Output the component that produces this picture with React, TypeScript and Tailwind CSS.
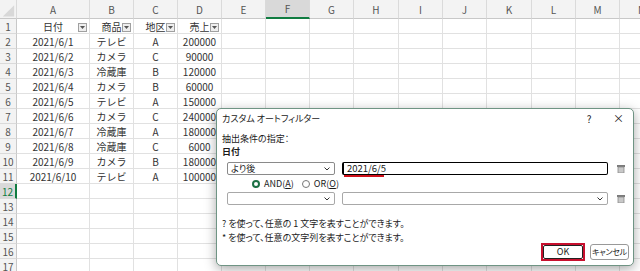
import React from "react";

const COLS = [17, 73, 44, 44, 44, 44, 44, 44, 45, 44, 44, 45, 44, 44, 44];
const LETTERS = ["", "A", "B", "C", "D", "E", "F", "G", "H", "I", "J", "K", "L", "M", "N"];

const DATA: string[][] = [
  ["日付", "商品", "地区", "売上"],
  ["2021/6/1", "テレビ", "A", "200000"],
  ["2021/6/2", "カメラ", "C", "90000"],
  ["2021/6/3", "冷蔵庫", "B", "120000"],
  ["2021/6/4", "カメラ", "B", "60000"],
  ["2021/6/5", "テレビ", "A", "150000"],
  ["2021/6/6", "カメラ", "C", "240000"],
  ["2021/6/7", "冷蔵庫", "A", "180000"],
  ["2021/6/8", "冷蔵庫", "C", "6000"],
  ["2021/6/9", "カメラ", "B", "180000"],
  ["2021/6/10", "テレビ", "A", "100000"],
];

const FONT = "[font-family:'Noto_Sans_CJK_JP','Liberation_Sans',sans-serif]";

function FilterBtn() {
  return (
    <div className="absolute right-[2px] top-[4px] w-[9px] h-[9px] border border-[#a0a0a0] bg-[#eeeeee] flex items-center justify-center">
      <svg width="5" height="3" viewBox="0 0 5 3">
        <path d="M0 0 L5 0 L2.5 3 Z" fill="#555" />
      </svg>
    </div>
  );
}

function Sheet() {
  const rows = Array.from({ length: 17 }, (_, i) => i + 1);
  return (
    <div className={`flex flex-col ${FONT} text-[10px] text-[#333]`}>
      <div className="flex h-[19px]">
        {COLS.map((w, i) => (
          <div
            key={i}
            style={{ width: w }}
            className={`shrink-0 h-full flex items-center justify-center text-[#555] border-r border-[#dadada] ${
              i === 6 ? "bg-[#d9d9d9] border-b-2 border-b-[#107c41] text-[#107c41]" : "bg-[#f3f3f3] border-b border-b-[#c8c8c8]"
            }`}
          >
            {i === 0 ? (
              <svg width="17" height="19" viewBox="0 0 17 19">
                <path d="M15 5 L15 17 L3 17 Z" fill="#d8d8d8" />
              </svg>
            ) : (
              LETTERS[i]
            )}
          </div>
        ))}
      </div>
      {rows.map((r) => (
        <div key={r} className="flex h-[15px]">
          {COLS.map((w, i) => {
            if (i === 0) {
              const sel = r === 12;
              return (
                <div
                  key={i}
                  style={{ width: w }}
                  className={`shrink-0 h-full flex items-center justify-center border-b border-[#dadada] ${
                    sel ? "bg-[#d9d9d9] border-r-2 border-r-[#107c41] text-[#107c41]" : "bg-[#f3f3f3] border-r border-r-[#c8c8c8] text-[#555]"
                  }`}
                >
                  {r}
                </div>
              );
            }
            const val = r <= 11 && i <= 4 ? DATA[r - 1][i - 1] : "";
            return (
              <div
                key={i}
                style={{ width: w }}
                className="relative shrink-0 h-full flex items-center justify-center bg-white border-r border-b border-[#e1e1e1]"
              >
                {val}
                {r === 1 && i <= 4 && <FilterBtn />}
              </div>
            );
          })}
        </div>
      ))}
    </div>
  );
}

function Chevron() {
  return (
    <svg width="6" height="4" viewBox="0 0 6 4">
      <path d="M0.5 0.5 L3 3 L5.5 0.5" stroke="#333" strokeWidth="1" fill="none" />
    </svg>
  );
}

function ClearIcon() {
  return (
    <svg width="8" height="8" viewBox="0 0 8 8">
      <rect x="0" y="0" width="8" height="2" fill="#7a7a7a" />
      <rect x="1" y="2" width="6" height="6" fill="#c8c8c8" stroke="#8a8a8a" strokeWidth="0.8" />
    </svg>
  );
}

function Dialog() {
  return (
    <div
      className={`absolute left-[216px] top-[108px] w-[418px] h-[158px] bg-white border border-[#6f9484] rounded-[5px] shadow-[0_3px_12px_rgba(0,0,0,0.35)] ${FONT} text-[9px] text-[#1a1a1a] [font-feature-settings:'palt'] flex flex-col pt-[3px] pl-[5px] pr-[4px]`}
    >
      <div className="flex items-center h-[13px]">
        <span className="flex-1">カスタム オートフィルター</span>
        <span className="w-[10px] text-center text-[10px]">?</span>
        <span className="w-[10px] ml-[19px] mr-[6px] text-center text-[11px]">×</span>
      </div>
      <div className="mt-[7px] h-[13px] flex items-center">抽出条件の指定：</div>
      <div className="h-[13px] flex items-center font-bold">日付</div>
      <div className="mt-[4px] h-[13px] flex items-center pl-[5px]">
        <div className="w-[108px] h-full border border-[#8a8a8a] rounded-[2px] flex items-center justify-between pl-[3px] pr-[4px]">
          <span>より後</span>
          <Chevron />
        </div>
        <div className="relative ml-[7px] w-[266px] h-full border border-black border-l-2 rounded-[2px] flex items-center pl-[3px] text-[9.5px]">
          <span>2021/6/5</span>
          <span className="absolute left-[0px] top-[12px] w-[40px] h-[2px] bg-[#d0101a]" />
        </div>
        <div className="ml-[9px]">
          <ClearIcon />
        </div>
      </div>
      <div className="h-[17px] flex items-center pl-[30px]">
        <span className="w-[8px] h-[8px] rounded-full border-[2.5px] border-[#1e7145] bg-white" />
        <span className="ml-[4px]">
          AND(<span className="underline">A</span>)
        </span>
        <span className="ml-[8px] w-[8px] h-[8px] rounded-full border border-[#777] bg-white" />
        <span className="ml-[4px]">
          OR(<span className="underline">O</span>)
        </span>
      </div>
      <div className="h-[13px] flex items-center pl-[5px]">
        <div className="w-[108px] h-full border border-[#a8a8a8] rounded-[2px] flex items-center justify-end pr-[4px]">
          <Chevron />
        </div>
        <div className="ml-[7px] w-[266px] h-full border border-[#a8a8a8] rounded-[2px] flex items-center justify-end pr-[4px]">
          <Chevron />
        </div>
        <div className="ml-[9px]">
          <ClearIcon />
        </div>
      </div>
      <div className="mt-[11px] h-[15px] flex items-center">? を使って、任意の 1 文字を表すことができます。</div>
      <div className="h-[12px] flex items-start">* を使って、任意の文字列を表すことができます。</div>
      <div className="h-[18px] flex items-center justify-end">
        <div className="w-[44px] h-[18px] border-2 border-[#c8102e] p-0">
          <div className="w-full h-full border border-[#222] rounded-[2px] bg-white flex items-center justify-center">OK</div>
        </div>
        <div className="ml-[5px] w-[39px] h-[16px] border border-[#999] rounded-[3px] bg-white flex items-center justify-center whitespace-nowrap text-[8px] tracking-[-0.3px]">
          キャンセル
        </div>
      </div>
    </div>
  );
}

export default function App() {
  return (
    <div className="relative w-[640px] h-[271px] overflow-hidden bg-white">
      <Sheet />
      <Dialog />
    </div>
  );
}
